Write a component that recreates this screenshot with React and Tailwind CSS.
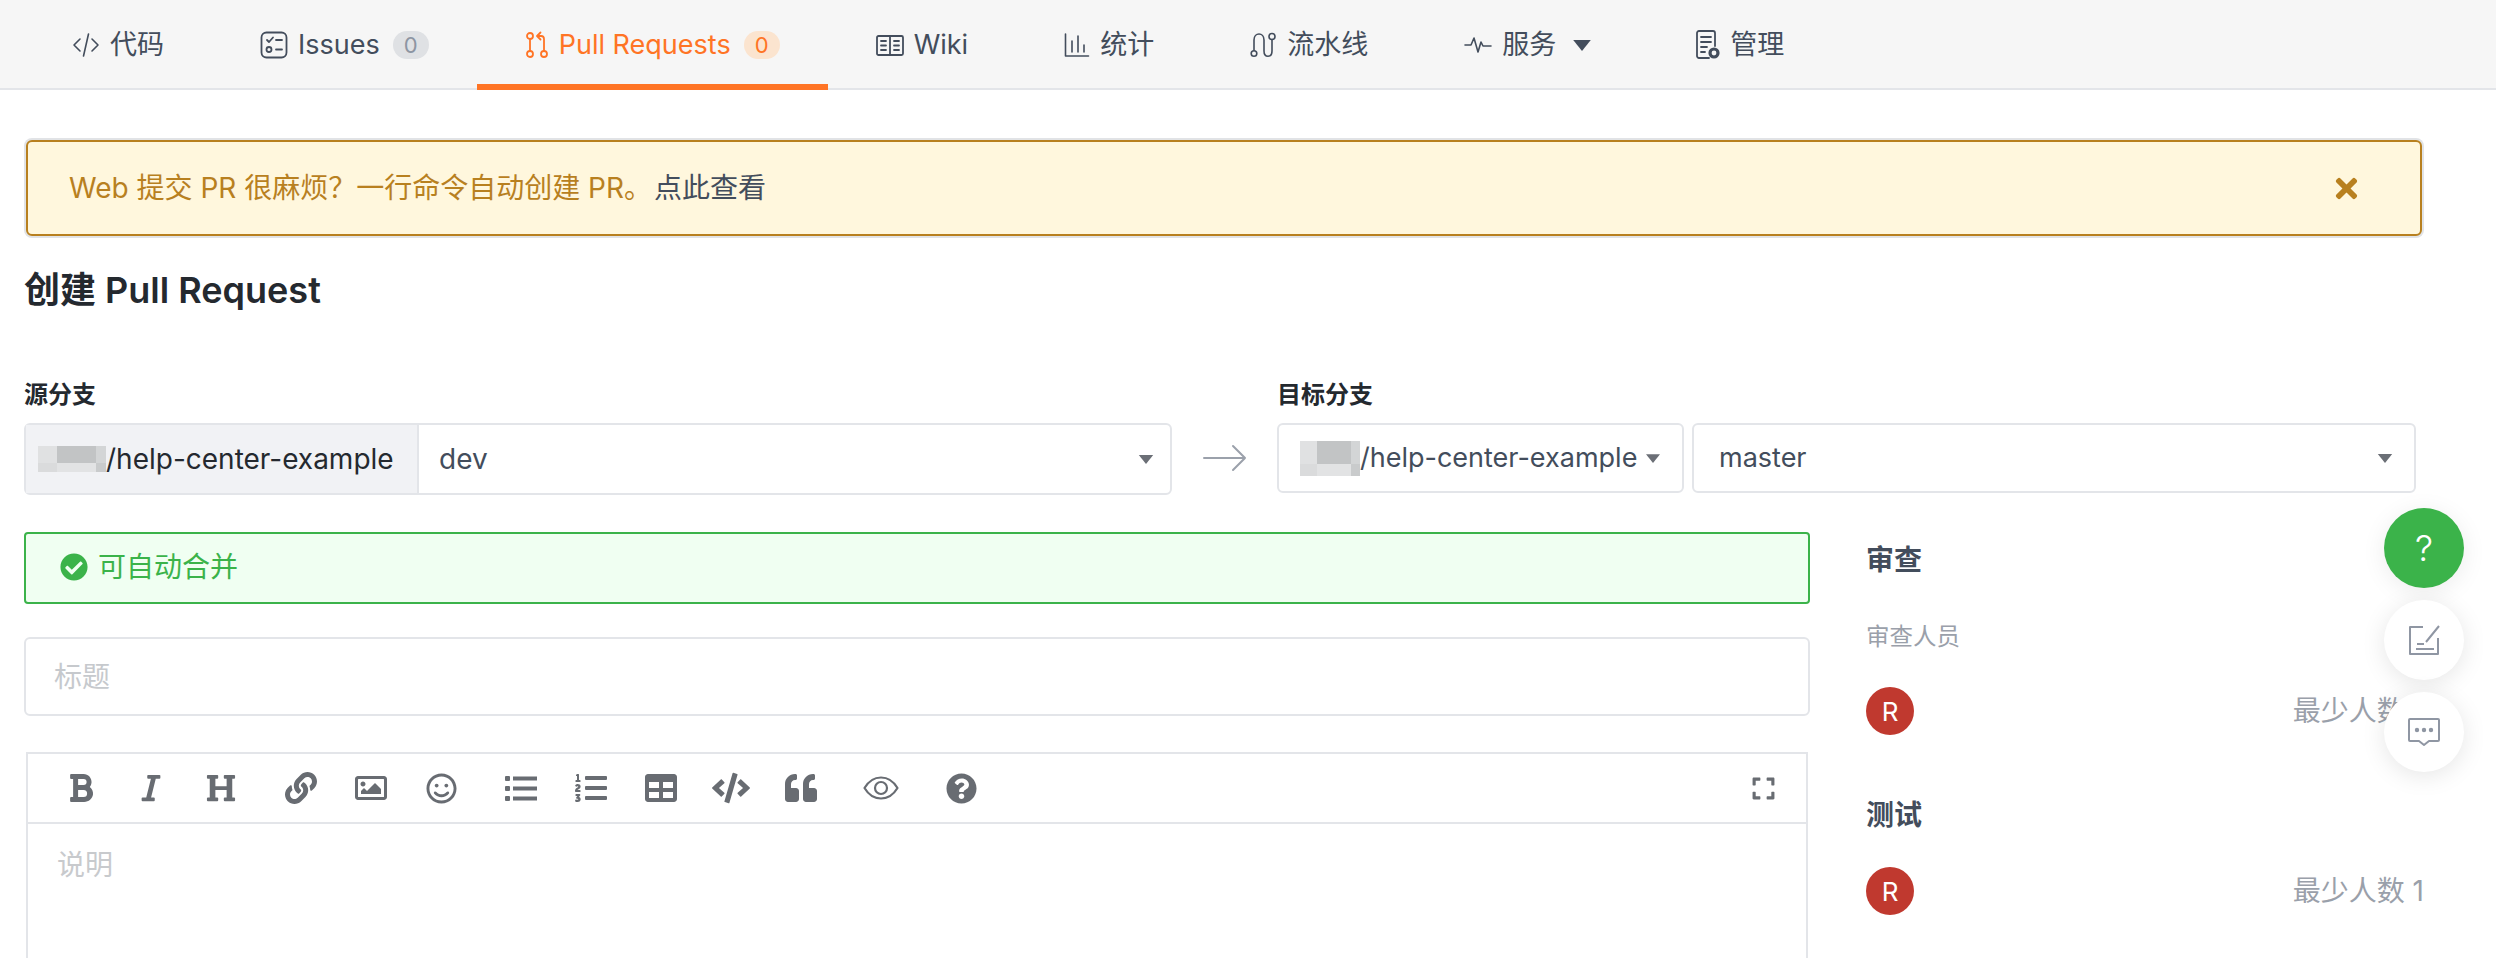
import {
  FaBold, FaItalic, FaHeading, FaLink, FaRegImage, FaRegSmile, FaListOl,
  FaTable, FaCode, FaQuoteLeft, FaQuestionCircle, FaExpand, FaTimes, FaCheckCircle,
} from 'react-icons/fa';

const stroke = { fill: 'none', stroke: 'currentColor', strokeWidth: 1.6, strokeLinecap: 'round', strokeLinejoin: 'round' };

const IconCode = () => (
  <svg width="28" height="28" viewBox="0 0 28 28" {...stroke}>
    <path d="M8 8l-6 6 6 6M20 8l6 6-6 6M16.500 3l-5 22" />
  </svg>
);
const IconIssues = () => (
  <svg width="28" height="28" viewBox="0 0 28 28" {...stroke} strokeWidth="1.8">
    <rect x="1.500" y="1.500" width="25" height="25" rx="5" />
    <path d="M7 9l2 2 4-4.500M16 9h6M16 18.500h6" />
    <circle cx="9" cy="18.500" r="2.500" />
  </svg>
);
const IconPull = () => (
  <svg width="24" height="28" viewBox="0 0 24 28" {...stroke} strokeWidth="1.8">
    <circle cx="5" cy="5" r="3" />
    <circle cx="5" cy="23" r="3" />
    <circle cx="19" cy="23" r="3" />
    <path d="M5 8v12M19 20V8c0-2-1-3-3-3h-3M15.500 1.500L12 5l3.500 3.500" />
  </svg>
);
const IconWiki = () => (
  <svg width="28" height="28" viewBox="0 0 28 28" {...stroke} strokeWidth="1.8">
    <rect x="1" y="5" width="26" height="19" rx="1.500" />
    <path d="M14 5v19M5 10h5M5 14.500h5M5 19h5M18 10h5M18 14.500h5M18 19h5" />
  </svg>
);
const IconStats = () => (
  <svg width="26" height="28" viewBox="0 0 26 28" {...stroke}>
    <path d="M1.500 3v22h23M8 21V10M14 21V5M20 21v-7" />
  </svg>
);
const IconPipeline = () => (
  <svg width="27" height="28" viewBox="0 0 27 28" {...stroke}>
    <circle cx="4" cy="22.500" r="2.800" />
    <circle cx="22" cy="5.500" r="3" />
    <path d="M4 19.500V9c0-8 10-8 10 0v11c0 7 8 7 8 0V8.500" />
  </svg>
);
const IconPulse = () => (
  <svg width="28" height="28" viewBox="0 0 28 28" {...stroke}>
    <path d="M1 14h6l3-7 4 14 3-10 2 4h8" />
  </svg>
);
const IconManage = () => (
  <svg className="ml-[9px]" width="24" height="30" viewBox="0 0 24 30" {...stroke} strokeWidth="1.8">
    <path d="M13 28H3a2 2 0 0 1-2-2V3a2 2 0 0 1 2-2h14a2 2 0 0 1 2 2v13" />
    <path d="M5 7h10M5 12h10M5 17h6M5 22h4" />
    <circle cx="18" cy="23" r="4" strokeWidth="3.200" />
  </svg>
);
const IconListUl = () => (
  <svg width="32" height="28" viewBox="0 0 32 28" fill="currentColor">
    <rect x="0" y="2" width="5" height="5" rx="1" />
    <rect x="0" y="12" width="5" height="5" rx="1" />
    <rect x="0" y="22" width="5" height="5" rx="1" />
    <rect x="8" y="2.500" width="24" height="4" />
    <rect x="8" y="12.500" width="24" height="4" />
    <rect x="8" y="22.500" width="24" height="4" />
  </svg>
);
const IconEye = () => (
  <svg width="36" height="28" viewBox="0 0 36 28" {...stroke} strokeWidth="2.200">
    <path d="M1.500 14C6 6.500 12 3.500 18 3.500S30 6.500 34.500 14C30 21.500 24 24.500 18 24.500S6 21.500 1.500 14z" />
    <circle cx="18" cy="14" r="6" />
  </svg>
);
const Caret = ({ className }) => (
  <svg className={className} viewBox="0 0 16 10"><path d="M0 0h16L8 10z" fill="currentColor" /></svg>
);

const tabs = [
  { label: '代码', icon: IconCode },
  { label: 'Issues', icon: IconIssues, count: 0 },
  { label: 'Pull Requests', icon: IconPull, count: 0, active: true },
  { label: 'Wiki', icon: IconWiki },
  { label: '统计', icon: IconStats },
  { label: '流水线', icon: IconPipeline },
  { label: '服务', icon: IconPulse, menu: true },
  { label: '管理', icon: IconManage },
];

function Tab({ tab }) {
  const Icon = tab.icon;
  return (
    <div className={`flex items-center self-start h-[90px] px-[48px] pt-[6px] gap-[10px] border-b-[6px] ${tab.active ? 'border-[#ff7425] text-[#ff7425]' : 'border-transparent text-[#434d5c]'}`}>
      <Icon />
      <span>{tab.label}</span>
      {tab.count !== undefined && (
        <span className={`ml-[3px] flex items-center justify-center w-[36px] h-[28px] rounded-full text-[22px] ${tab.active ? 'bg-[#fbe4cf] text-[#ff7425]' : 'bg-[#dfe1e4] text-[#8d95a2]'}`}>
          {tab.count}
        </span>
      )}
      {tab.menu && <Caret className="ml-[7px] w-[18px] h-[11px]" />}
    </div>
  );
}

function Blurred({ className }) {
  return (
    <div className={`grid grid-cols-[2fr_4fr_1fr] grid-rows-[2fr_1fr] shrink-0 blur-[0.5px] ${className}`}>
      <div className="bg-[#e0e1e2]" />
      <div className="bg-[#c2c4c5]" />
      <div className="bg-[#d3d5d6]" />
      <div className="bg-[#dadbdc]" />
      <div className="bg-[#e2e3e4]" />
      <div className="bg-[#c9cbcc]" />
    </div>
  );
}

const toolbar = [
  [[FaBold, 32], [FaItalic, 30], [FaHeading, 30]],
  [[FaLink, 32], [FaRegImage, 32], [FaRegSmile, 31]],
  [[IconListUl], [FaListOl, 32], [FaTable, 32], [FaCode, 38], [FaQuoteLeft, 32]],
  [[IconEye]],
  [[FaQuestionCircle, 31]],
];

function Reviewer({ hint }) {
  return (
    <div className="flex items-center justify-between h-[48px]">
      <span className="flex items-center justify-center w-[48px] h-[48px] rounded-full bg-[#c0392f] text-white text-[26px]">R</span>
      <span className="text-[28px] text-[#9aa0aa]">{hint}</span>
    </div>
  );
}

export default function App() {
  return (
    <div className="relative h-[958px] overflow-hidden bg-white text-[28px] font-[Inter,'Noto_Sans_CJK_SC',sans-serif] text-[#434d5c]">
      <nav className="flex items-start h-[90px] pl-[24px] bg-[#f6f6f6] border-b-2 border-[#e3e5e9] text-[27px]">
        {tabs.map(tab => <Tab key={tab.label} tab={tab} />)}
      </nav>

      <main className="w-[2400px] ml-[24px]">
        <div className="flex items-center justify-between h-[96px] mt-[50px] mx-[2px] pl-[41px] pr-[58px] rounded-[6px] border-2 border-[#b8801f] bg-[#fff7dd] shadow-[0_0_0_2px_#e1e3e6] text-[#b8801f]">
          <p>Web 提交 PR 很麻烦？一行命令自动创建 PR。<span className="ml-[2px] text-[#434d5c]">点此查看</span></p>
          <FaTimes size={31} />
        </div>

        <h1 className="mt-[32px] text-[36px] leading-[44px] font-semibold text-[#24292f]">创建 Pull Request</h1>

        <div className="grid grid-cols-[1148px_105px_1139px] mt-[68px]">
          <label className="text-[24px] leading-[30px] font-semibold text-[#24292f]">源分支</label>
          <span />
          <label className="text-[24px] leading-[30px] font-semibold text-[#24292f]">目标分支</label>

          <div className="flex mt-[13px] h-[72px] rounded-[6px] border-2 border-[#e3e5e9]">
            <div className="flex items-center w-[393px] pl-[12px] border-r-2 border-[#e3e5e9] bg-[#f1f2f5] text-[#24292f]">
              <Blurred className="w-[68px] h-[26px]" />
              <span>/help-center-example</span>
            </div>
            <div className="flex flex-1 items-center justify-between pl-[20px] pr-[16px]">
              <span>dev</span>
              <Caret className="w-[16px] h-[9px] text-[#6b6f76]" />
            </div>
          </div>

          <svg className="self-center justify-self-center mt-[10px] text-[#9ba1ab]" width="44" height="28" viewBox="0 0 44 28" {...stroke} strokeWidth="2">
            <path d="M1 14h41M30 2l12 12-12 12" />
          </svg>

          <div className="flex gap-[8px] mt-[13px] h-[70px] text-[27px]">
            <div className="flex items-center w-[407px] pl-[21px] rounded-[6px] border-2 border-[#e3e5e9]">
              <Blurred className="w-[60px] h-[35px]" />
              <span>/help-center-example</span>
              <Caret className="ml-[9px] w-[14px] h-[9px] text-[#6b6f76]" />
            </div>
            <div className="flex flex-1 items-center justify-between pl-[25px] pr-[21px] rounded-[6px] border-2 border-[#e3e5e9]">
              <span>master</span>
              <Caret className="w-[16px] h-[9px] text-[#6b6f76]" />
            </div>
          </div>
        </div>

        <div className="flex mt-[37px]">
          <div className="w-[1786px] shrink-0">
            <div className="flex items-center gap-[10px] h-[72px] pb-[3px] pl-[34px] rounded-[4px] border-2 border-[#3bb34a] bg-[#f0fff2] text-[#3bb34a]">
              <FaCheckCircle size={28} />
              <span>可自动合并</span>
            </div>
            <div className="flex items-center h-[79px] mt-[33px] pl-[28px] rounded-[6px] border-2 border-[#e3e5e9] text-[#c6c9cd]">标题</div>
            <div className="mt-[36px] mx-[2px] h-[300px] border-2 border-[#e3e5e9]">
              <div className="flex items-center justify-between h-[70px] pl-[18px] pr-[30px] border-b-2 border-[#e3e5e9] text-[#686c72]">
                <div className="flex">
                  {toolbar.map((group, i) => (
                    <div key={i} className="flex mr-[10px]">
                      {group.map(([Icon, size], j) => (
                        <span key={j} className="flex items-center justify-center w-[70px] h-[40px]"><Icon size={size} /></span>
                      ))}
                    </div>
                  ))}
                </div>
                <FaExpand size={25} />
              </div>
              <p className="mt-[20px] pl-[29px] text-[#c8cacd]">说明</p>
            </div>
          </div>

          <aside className="flex-1 ml-[56px] pt-[10px]">
            <h3 className="leading-[36px] font-semibold">审查</h3>
            <p className="mt-[44px] text-[23.500px] leading-[30px] text-[#9aa0aa]">审查人员</p>
            <div className="mt-[35px]"><Reviewer hint="最少人数 1" /></div>
            <h3 className="mt-[62px] leading-[36px] font-semibold">测试</h3>
            <div className="mt-[34px]"><Reviewer hint="最少人数 1" /></div>
          </aside>
        </div>
      </main>

      <div className="absolute top-[508px] right-[32px] flex flex-col gap-[12px] text-[#8f96a3]">
        <button className="flex items-center justify-center w-[80px] h-[80px] rounded-full bg-[#3bb34a] text-white text-[36px] font-light shadow-[0_4px_24px_rgba(0,0,0,0.08)]">?</button>
        <button className="flex items-center justify-center w-[80px] h-[80px] rounded-full bg-white shadow-[0_4px_24px_rgba(0,0,0,0.1)]">
          <svg width="32" height="32" viewBox="0 0 32 32" {...stroke} strokeWidth="2" strokeLinecap="butt">
            <path d="M15 3H2v27h28V14M31 2L18 18M9 20h7M8 25h18" />
          </svg>
        </button>
        <button className="flex items-center justify-center w-[80px] h-[80px] rounded-full bg-white shadow-[0_4px_24px_rgba(0,0,0,0.1)]">
          <svg width="34" height="30" viewBox="0 0 34 30" {...stroke} strokeWidth="2">
            <path d="M3 2h28a1 1 0 0 1 1 1v20a1 1 0 0 1-1 1h-9l-5 4-5-4H3a1 1 0 0 1-1-1V3a1 1 0 0 1 1-1z" />
            <circle cx="10" cy="13" r="1.200" fill="currentColor" />
            <circle cx="17" cy="13" r="1.200" fill="currentColor" />
            <circle cx="24" cy="13" r="1.200" fill="currentColor" />
          </svg>
        </button>
      </div>
    </div>
  );
}
